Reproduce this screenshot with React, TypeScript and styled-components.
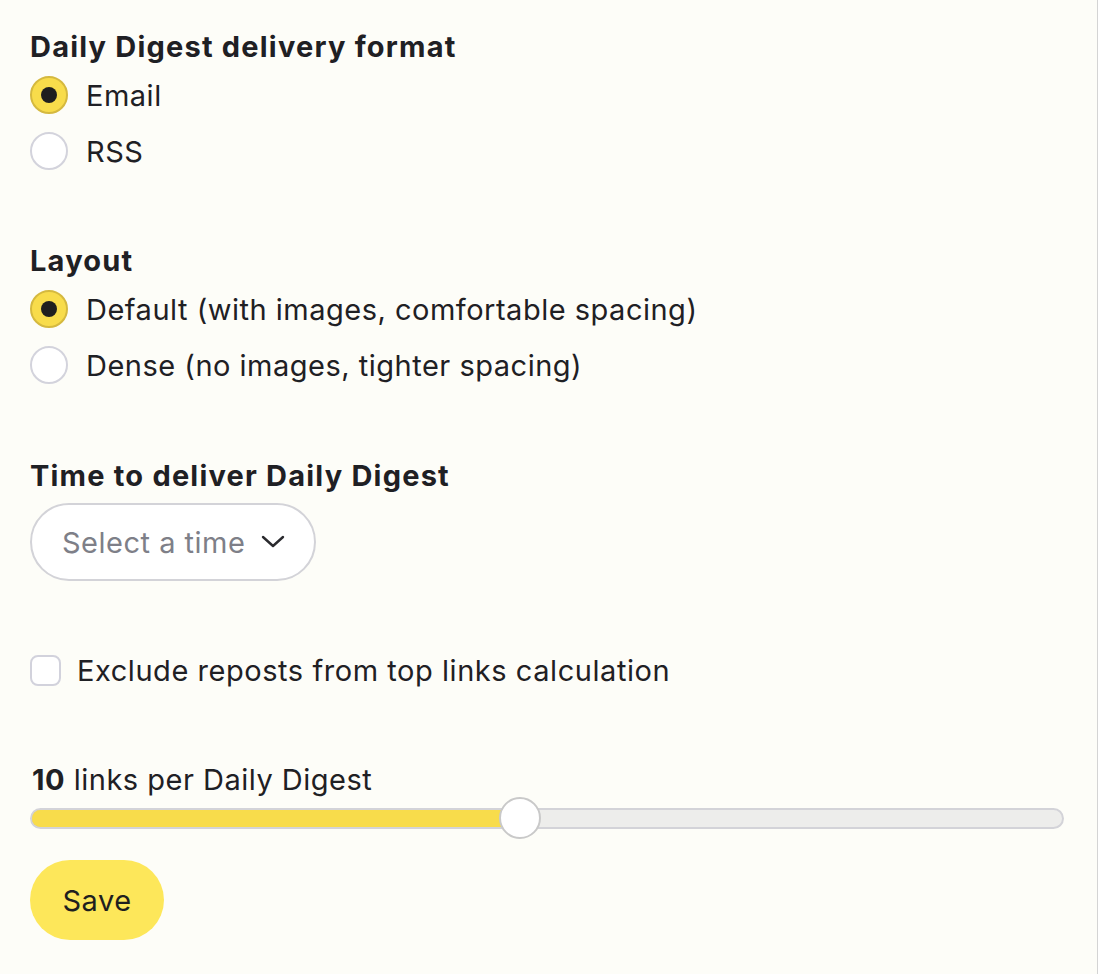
import React, { useState } from "react";
import styled, { createGlobalStyle } from "styled-components";

const Global = createGlobalStyle`
  html, body { margin: 0; padding: 0; background: #fdfdf8; }
  body { font-family: Inter, "Noto Sans", Arial, sans-serif; color: #1f2024; }
  * { box-sizing: border-box; }
`;

const Page = styled.div`
  min-height: 974px;
  border-right: 1px solid #d4d4d4;
  padding: 27px 30px;
  display: flex;
  flex-direction: column;
`;

const Section = styled.div<{ $gap?: number }>`
  display: flex;
  flex-direction: column;
  margin-bottom: ${(p) => p.$gap ?? 0}px;
`;

const Heading = styled.div`
  font-size: 29px;
  font-weight: 700;
  line-height: 40px;
  letter-spacing: 1.2px;
`;

const RadioRow = styled.label`
  display: flex;
  align-items: center;
  gap: 18px;
  height: 56px;
  font-size: 29px;
  letter-spacing: 0.5px;
  cursor: pointer;
`;

const RadioCircle = styled.span<{ $checked: boolean }>`
  width: 38px;
  height: 38px;
  border-radius: 50%;
  flex: none;
  display: flex;
  align-items: center;
  justify-content: center;
  background: ${(p) => (p.$checked ? "#f8dc4b" : "#ffffff")};
  border: 2px solid ${(p) => (p.$checked ? "#d5b93f" : "#d3d3dc")};
  &::after {
    content: "";
    width: 16px;
    height: 16px;
    border-radius: 50%;
    background: #1f1f1f;
    display: ${(p) => (p.$checked ? "block" : "none")};
  }
`;

const SelectPill = styled.button`
  margin-top: 7px;
  align-self: flex-start;
  height: 78px;
  border-radius: 39px;
  border: 2px solid #d3d3d8;
  background: #ffffff;
  display: flex;
  align-items: center;
  padding: 0 29px 0 30px;
  gap: 16px;
  white-space: nowrap;
  font-family: inherit;
  font-size: 29px;
  letter-spacing: 0.5px;
  color: #7e7f88;
  cursor: pointer;
`;

const CheckRow = styled.label`
  display: flex;
  align-items: center;
  gap: 16px;
  height: 40px;
  font-size: 29px;
  letter-spacing: 0.55px;
  cursor: pointer;
`;

const CheckBox = styled.span`
  width: 31px;
  height: 31px;
  border-radius: 8px;
  border: 2px solid #d2d2dc;
  background: #ffffff;
  flex: none;
`;

const SliderLabel = styled.div`
  font-size: 29px;
  line-height: 34px;
  letter-spacing: 0.5px;
  padding-left: 2px;
  b { font-weight: 700; }
`;

const SliderWrap = styled.div`
  position: relative;
  height: 42px;
  display: flex;
  align-items: center;
`;

const Track = styled.div`
  width: 1034px;
  height: 21px;
  border-radius: 11px;
  background: #ededeb;
  border: 2px solid #d3d3d8;
  position: relative;
  overflow: hidden;
`;

const Fill = styled.div`
  position: absolute;
  left: -2px;
  top: -2px;
  bottom: -2px;
  background: #f8dc4b;
  border: 2px solid #d9bd41;
  border-radius: 11px 0 0 11px;
`;

const Thumb = styled.div`
  position: absolute;
  top: 0;
  width: 42px;
  height: 42px;
  border-radius: 50%;
  background: #ffffff;
  border: 2px solid #c9c9c9;
  transform: translateX(-50%);
`;

const SaveButton = styled.button`
  margin-top: 21px;
  align-self: flex-start;
  height: 80px;
  width: 134px;
  border-radius: 40px;
  border: none;
  background: #fde75a;
  font-family: inherit;
  font-size: 29px;
  letter-spacing: 0.5px;
  color: #1f1f1f;
  cursor: pointer;
`;

function Chevron() {
  return (
    <svg width="24" height="14" viewBox="0 0 24 14" fill="none" style={{ flex: "none" }}>
      <path d="M2 2 L12 11 L22 2" stroke="#2a2a2e" strokeWidth="2.4" strokeLinecap="round" strokeLinejoin="round" />
    </svg>
  );
}

export default function App() {
  const [format, setFormat] = useState("email");
  const [layout, setLayout] = useState("default");
  const value = 10;
  const pct = ((value - 1) / 19) * 100;
  const trackW = 1034;
  const thumbX = (pct / 100) * trackW;
  return (
    <>
      <Global />
      <Page>
        <Section $gap={62}>
          <Heading>Daily Digest delivery format</Heading>
          <RadioRow onClick={() => setFormat("email")}>
            <RadioCircle $checked={format === "email"} />
            Email
          </RadioRow>
          <RadioRow onClick={() => setFormat("rss")}>
            <RadioCircle $checked={format === "rss"} />
            RSS
          </RadioRow>
        </Section>
        <Section $gap={63}>
          <Heading>Layout</Heading>
          <RadioRow onClick={() => setLayout("default")}>
            <RadioCircle $checked={layout === "default"} />
            Default (with images, comfortable spacing)
          </RadioRow>
          <RadioRow onClick={() => setLayout("dense")}>
            <RadioCircle $checked={layout === "dense"} />
            Dense (no images, tighter spacing)
          </RadioRow>
        </Section>
        <Section $gap={69}>
          <Heading>Time to deliver Daily Digest</Heading>
          <SelectPill>
            Select a time
            <Chevron />
          </SelectPill>
        </Section>
        <Section $gap={73}>
          <CheckRow>
            <CheckBox />
            Exclude reposts from top links calculation
          </CheckRow>
        </Section>
        <Section>
          <SliderLabel>
            <b>10</b> links per Daily Digest
          </SliderLabel>
          <SliderWrap>
            <Track>
              <Fill style={{ width: `${thumbX}px` }} />
            </Track>
            <Thumb style={{ left: `${thumbX}px` }} />
          </SliderWrap>
          <SaveButton>Save</SaveButton>
        </Section>
      </Page>
    </>
  );
}
